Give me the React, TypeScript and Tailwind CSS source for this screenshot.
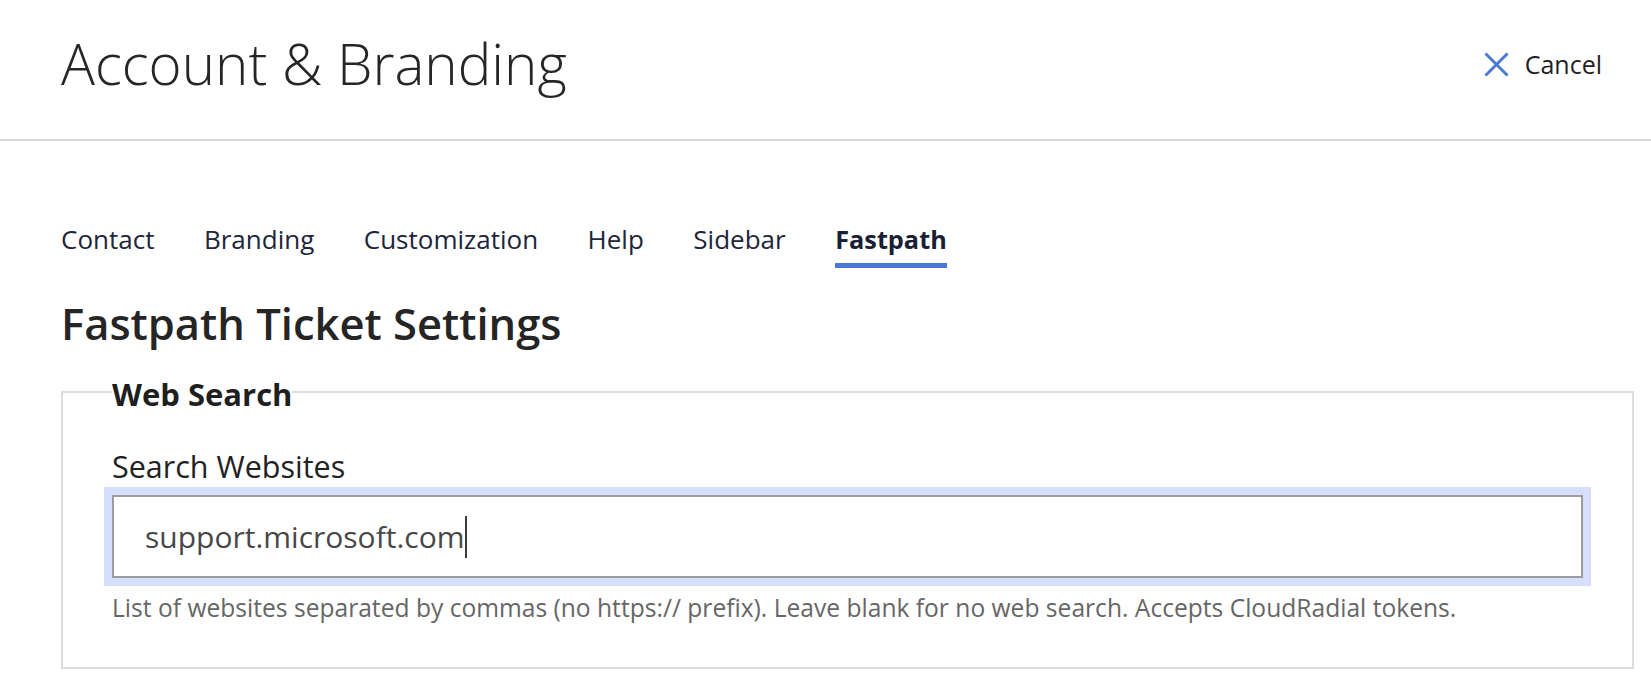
import { useEffect, useRef } from 'react'

const tabs = ['Contact', 'Branding', 'Customization', 'Help', 'Sidebar', 'Fastpath']
const activeTab = 'Fastpath'
const siteValue = 'support.microsoft.com'

export default function App() {
  const inputRef = useRef<HTMLInputElement>(null)

  // keep the caret at the end of the value, like the focused field in the shot
  useEffect(() => {
    const el = inputRef.current
    if (!el) return
    el.focus()
    const n = el.value.length
    el.setSelectionRange(n, n)
  }, [])

  return (
    <div className="min-h-screen bg-white font-['Open_Sans',sans-serif]">
      {/* Header */}
      <header className="flex items-center justify-between pl-[61px] pr-[49px] pt-[36px] pb-[47px] border-b-2 border-[#d6d6d6]">
        <h1 className="text-[56.5px] leading-[56px] font-light text-[#262626]">Account &amp; Branding</h1>
        <button className="flex items-center gap-[16px] text-[25px] leading-[25px] text-[#1f1f1f]">
          <svg width="25" height="25" viewBox="0 0 25 25" className="text-[#4a78d6]">
            <path d="M1.5 1.5L23.5 23.5M23.5 1.5L1.5 23.5" stroke="currentColor" strokeWidth="3" fill="none" />
          </svg>
          Cancel
        </button>
      </header>

      <main className="pl-[61px] pr-[17px] pt-[85px]">
        {/* Tabs */}
        <nav className="flex gap-[49.5px]">
          {tabs.map((tab) => (
            <button
              key={tab}
              className={
                tab === activeTab
                  ? 'text-[25.3px] leading-[26px] pb-[11px] border-b-[5px] border-[#4a78d6] font-bold text-[#1a1f36]'
                  : 'text-[26px] leading-[26px] pb-[11px] border-b-[5px] border-transparent text-[#20253a]'
              }
            >
              {tab}
            </button>
          ))}
        </nav>

        <h2 className="mt-[34px] text-[43.5px] leading-[43px] font-semibold text-[#252525]">Fastpath Ticket Settings</h2>

        <fieldset className="mt-[30px] border-2 border-[#dcdcdc] px-[49px] pt-[42px] pb-[46px]">
          <legend className="pt-[4px] text-[31px] leading-[30px] font-bold text-[#1f1f1f]">Web Search</legend>

          <label htmlFor="search-websites" className="block text-[30.5px] leading-[30px] text-[#222]">
            Search Websites
          </label>
          <div className="relative mt-[14px]">
            <input
              id="search-websites"
              ref={inputRef}
              defaultValue={siteValue}
              className="block w-full h-[83px] border-2 border-[#9c9c9c] pl-[31px] text-[30px] text-[#474747] caret-[#333] outline-none shadow-[0_0_0_8px_#d5defc]"
            />
            {/* caret marker after the value */}
            <span
              aria-hidden
              className="pointer-events-none absolute left-[33px] top-1/2 -translate-y-1/2 h-[42px] leading-[42px] text-[30px] text-transparent border-r-2 border-[#3a3a3a] whitespace-pre"
            >
              {siteValue}
            </span>
          </div>
          <p className="mt-[18px] whitespace-nowrap text-[24.6px] leading-[24.6px] text-[#666]">
            List of websites separated by commas (no https:// prefix). Leave blank for no web search. Accepts CloudRadial tokens.
          </p>
        </fieldset>
      </main>
    </div>
  )
}
